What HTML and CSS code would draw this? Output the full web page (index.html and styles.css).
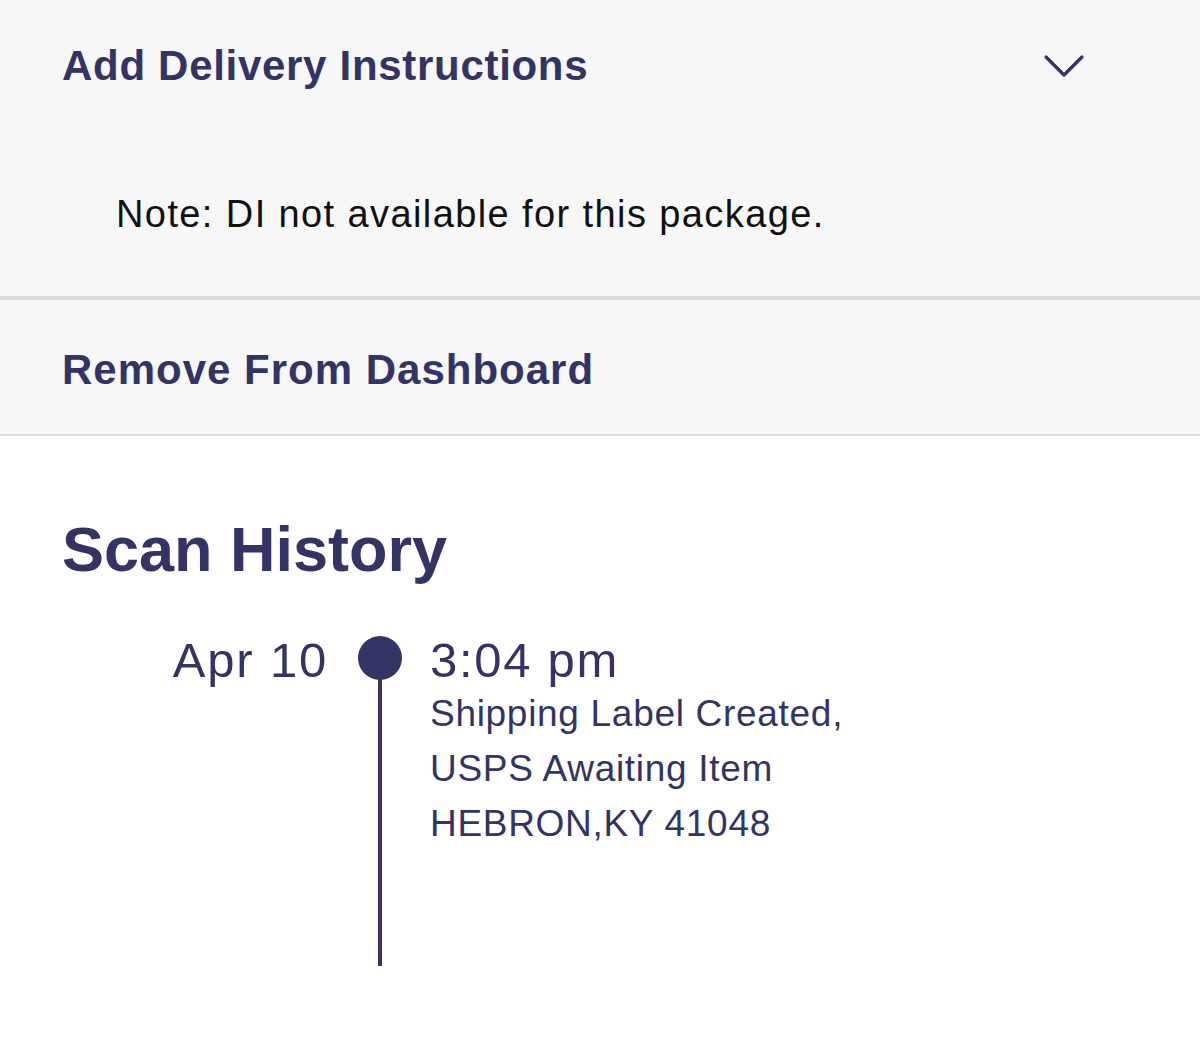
FILE: index.html
```html
<!DOCTYPE html>
<html>
<head>
<meta charset="utf-8">
<link rel="stylesheet" href="styles.css">
</head>
<body>
<section class="panel di">
  <div class="di-head">
    <h2 class="panel-title">Add Delivery Instructions</h2>
    <svg class="chevron" width="42" height="26" viewBox="0 0 42 26"><path d="M3 4 L21 22 L39 4" fill="none" stroke="#333366" stroke-width="3.2" stroke-linecap="round" stroke-linejoin="round"/></svg>
  </div>
  <p class="note">Note: DI not available for this package.</p>
</section>
<section class="panel remove">
  <h2 class="panel-title">Remove From Dashboard</h2>
</section>
<section class="history">
  <h1 class="history-title">Scan History</h1>
  <div class="event">
    <div class="date">Apr 10</div>
    <div class="track"><span class="dot"></span><span class="line"></span></div>
    <div class="info">
      <div class="time">3:04 pm</div>
      <div class="detail">Shipping Label Created,</div>
      <div class="detail">USPS Awaiting Item</div>
      <div class="detail">HEBRON,KY 41048</div>
    </div>
  </div>
</section>
</body>
</html>
```

FILE: styles.css
```css
html, body {
  margin: 0;
  padding: 0;
  background: #ffffff;
  font-family: "Liberation Sans", Arial, sans-serif;
  color: #333366;
}
.panel {
  background: #f7f7f7;
}
.di {
  border-bottom: 4px solid #d9d9d9;
  height: 296px;
  box-sizing: content-box;
}
.di-head {
  display: flex;
  align-items: center;
  justify-content: space-between;
  padding: 38px 115px 0 62px;
}
.panel-title {
  margin: 0;
  font-size: 42px;
  font-weight: bold;
  line-height: 56px;
  letter-spacing: 0.7px;
  color: #333366;
}
.chevron {
  display: block;
  margin-top: 0;
}
.note {
  margin: 100px 0 0 116px;
  font-size: 38px;
  line-height: 40px;
  letter-spacing: 1.4px;
  color: #111111;
}
.remove {
  height: 134px;
  border-bottom: 2px solid #dcdcdc;
  box-sizing: content-box;
  padding: 0 0 0 62px;
  display: flex;
  align-items: center;
}
.remove .panel-title {
  margin-top: 6px;
  letter-spacing: 1px;
}
.history {
  padding: 78px 0 0 62px;
}
.history-title {
  margin: 0;
  font-size: 63px;
  font-weight: bold;
  line-height: 70px;
  color: #333366;
}
.event {
  display: flex;
  margin-top: 48px;
  align-items: flex-start;
}
.date {
  width: 266px;
  padding-top: 2px;
  text-align: right;
  font-size: 49px;
  line-height: 52px;
  letter-spacing: 1.8px;
}
.track {
  width: 48px;
  margin-left: 28px;
  display: flex;
  flex-direction: column;
  align-items: center;
  padding-top: 4px;
}
.dot {
  width: 44px;
  height: 44px;
  border-radius: 50%;
  background: #333366;
}
.line {
  width: 4px;
  height: 288px;
  background: #333366;
  margin-top: -2px;
}
.info {
  margin-left: 26px;
  padding-top: 2px;
}
.time {
  font-size: 49px;
  line-height: 52px;
  letter-spacing: 1.7px;
}
.detail {
  font-size: 37px;
  line-height: 55px;
  letter-spacing: 0.7px;
}
```
